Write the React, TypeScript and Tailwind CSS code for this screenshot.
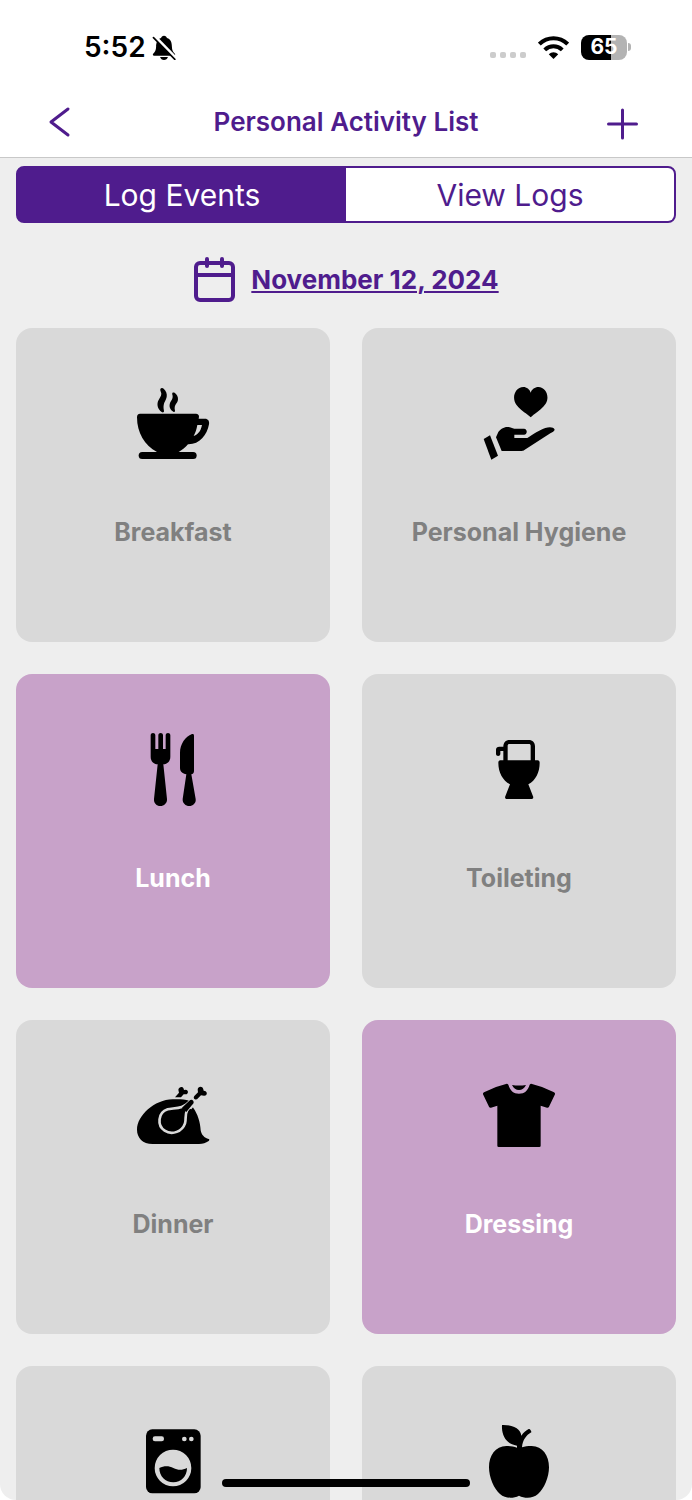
import { useState, type ReactNode } from 'react';

const CARD_BG = 'fill-[#d9d9d9]';
const CARD_LINE = 'stroke-[#d9d9d9]';

function ActivityIcon({ viewBox, children }: { viewBox: string; children: ReactNode }) {
  return (
    <svg viewBox={viewBox} className="size-[72px] overflow-visible" fill="currentColor" aria-hidden="true">
      {children}
    </svg>
  );
}

const breakfastIcon = (
  <ActivityIcon viewBox="51 54 216 216">
    <path d="M121 57C123 53 128 53 131 56C138 63 142 71 140 81C138 91 132 96 131 106C130 112 131 118 132 123C132 128 128 128 125 126C114 119 110 106 114 94C117 85 124 80 124 71C123 65 120 62 121 57Z" />
    <path d="M157 69C160 66 165 68 168 72C174 79 176 88 172 96C168 103 163 107 164 116L165 122C165 126 161 127 158 124C149 118 147 108 150 99C153 92 159 87 158 78C157 74 156 72 157 69Z" />
    <path
      fillRule="evenodd"
      d="M60 131H228C234 131 237 135 237 140L236 146H255C264 146 269 153 267 163C261 196 238 224 204 223C196 232 187 240 176 246H111C74 226 51 189 51 142C51 135 54 131 60 131ZM232 165C230 178 226 189 221 198C232 195 242 185 246 165Z"
    />
    <rect x="56" y="246" width="174" height="21" rx="10.5" />
  </ActivityIcon>
);

const hygieneIcon = (
  <ActivityIcon viewBox="54 54 216 216">
    <path d="M197 142C190 135 165 119 154 104C139 83 150 52 175 51C185 51 194 58 197 68C200 58 210 51 220 51C243 52 255 80 242 101C232 117 207 132 197 142Z" />
    <path d="M56 207L75 196L99 257L79 269Z" />
    <path d="M93 202L100 186C106 178 117 170 129 171C137 171 141 175 148 176H177C188 176 188 194 177 194H148V204H187C202 194 226 179 241 174C252 170 266 170 269 179C268 184 262 186 256 190L177 241C174 243 172 243 168 243H110Z" />
  </ActivityIcon>
);

const lunchIcon = (
  <ActivityIcon viewBox="51 57 216 216">
    <path d="M92 61C92 52 106 52 106 61V102H115V61C115 52 129 52 129 61V102H137V61C137 52 151 52 151 61V125C151 139 142 147 130 148L141 252C142 265 132 273 121 273C110 273 101 265 102 252L113 148C101 147 92 139 92 125Z" />
    <path d="M216 57C220 56 222 58 222 62V168C222 174 219 177 214 178L227 252C229 265 218 273 208 273C197 273 187 265 188 252L199 178C188 176 180 170 180 159V113C180 87 196 65 216 57Z" />
  </ActivityIcon>
);

const toiletIcon = (
  <ActivityIcon viewBox="54 57 216 216">
    <path
      fillRule="evenodd"
      d="M134 75H191C203 75 210 83 210 94V136H218C222 136 224 139 224 143C224 172 212 196 190 208L204 244C206 249 204 252 199 252H126C121 252 119 249 121 244L135 208C113 196 100 172 100 143C100 139 102 136 106 136H115V108H106V117C106 125 93 125 93 117V104C93 98 97 95 103 95H115C115 83 122 75 134 75ZM133 87C130 87 128 89 128 92V136H197V92C197 89 195 87 192 87Z"
    />
  </ActivityIcon>
);

const dinnerIcon = (
  <ActivityIcon viewBox="51 60 216 216">
    <path d="M98 252C68 252 51 233 51 209C51 167 103 119 158 118C177 117 193 118 208 122L220 144C233 162 241 187 242 211C244 224 253 234 266 237C269 238 268 241 266 243C257 249 249 252 237 252Z" />
    <path
      d="M214 120C205 129 194 138 185 141C171 146 153 145 143 148C113 158 111 197 134 212C157 227 187 214 195 190C199 178 194 165 201 152C207 142 215 135 224 126Z"
      fill="none"
      className={CARD_LINE}
      strokeWidth="8"
      strokeLinejoin="round"
    />
    <path d="M205 122L222 117L230 128L214 148L199 143Z" className={CARD_BG} />
    <path d="M208 122C213 117 221 119 221 127C221 131 218 133 216 135L199 156L186 143Z" />
    <path d="M223 108L234 97L233 89C234 78 248 78 250 88L251 92L255 93C264 97 261 108 252 107L243 106L231 118C225 120 218 115 223 108Z" />
    <path d="M165 112L177 98L175 89C177 79 189 78 191 86L192 90L197 89C206 90 206 102 197 103L191 103L183 112Z" />
  </ActivityIcon>
);

const dressingIcon = (
  <ActivityIcon viewBox="54 60 216 216">
    <path d="M123 72Q127 70 130 74C135 91 145 101 162 101C179 101 189 91 194 74Q197 70 201 72L231 81L267 97Q271 99 270 103L252 140Q250 144 246 143L227 137V257Q227 261 223 261H101Q97 261 97 257V137L78 143Q74 144 72 140L54 103Q53 99 57 97L93 81Z" />
    <path d="M141 75Q162 78 183 75C178 86 171 90 162 90C153 90 146 86 141 75Z" />
  </ActivityIcon>
);

const laundryIcon = (
  <ActivityIcon viewBox="411 198 216 216">
    <rect x="438" y="208" width="164" height="192" rx="19" />
    <rect x="458" y="229" width="34" height="15" rx="7" className={CARD_BG} />
    <circle cx="553" cy="237" r="7" className={CARD_BG} />
    <circle cx="574" cy="237" r="7" className={CARD_BG} />
    <circle cx="519" cy="324" r="55" className={CARD_BG} />
    <path d="M478 324C492 317 507 317 520 324C534 331 547 331 561 324C561 349 543 367 520 367C496 367 478 349 478 324Z" />
  </ActivityIcon>
);

const snackIcon = (
  <ActivityIcon viewBox="411 198 216 216">
    <path d="M468 195C502 194 523 206 526 227C532 218 540 212 548 207C552 205 557 214 556 217C540 226 530 240 528 262C536 259 545 258 557 258C590 259 609 286 609 322C609 352 594 387 576 402C560 416 537 416 519 407C501 416 478 416 462 402C444 387 429 352 429 322C429 286 448 259 481 258C493 258 504 260 513 263V257C483 253 466 229 468 195Z" />
  </ActivityIcon>
);

type Activity = { id: string; label?: string; icon: ReactNode; logged: boolean };

const activities: Activity[] = [
  { id: 'Breakfast', label: 'Breakfast', icon: breakfastIcon, logged: false },
  { id: 'Personal Hygiene', label: 'Personal Hygiene', icon: hygieneIcon, logged: false },
  { id: 'Lunch', label: 'Lunch', icon: lunchIcon, logged: true },
  { id: 'Toileting', label: 'Toileting', icon: toiletIcon, logged: false },
  { id: 'Dinner', label: 'Dinner', icon: dinnerIcon, logged: false },
  { id: 'Dressing', label: 'Dressing', icon: dressingIcon, logged: true },
  { id: 'Laundry', icon: laundryIcon, logged: false },
  { id: 'Snack', icon: snackIcon, logged: false },
];

function StatusBar() {
  return (
    <div className="flex h-[90px] shrink-0 items-center justify-between pt-1 pr-[61px] pl-[84px] text-black">
      <div className="flex items-center gap-1.5">
        <span className="text-[28px] leading-8 font-semibold">5:52</span>
        <svg viewBox="0 0 72 76" className="h-[25px] w-6" fill="currentColor" aria-hidden="true">
          <path d="M36 2C41 2 44 5 45 9C57 13 60 23 60 36C60 47 64 52 69 57C71 60 70 63 66 63H6C2 63 1 60 3 57C8 52 12 47 12 36C12 23 16 13 27 9C28 5 31 2 36 2Z" />
          <path d="M24 67H48C46 73 42 76 36 76C30 76 26 73 24 67Z" />
          <path d="M7 3L72 70" stroke="white" strokeWidth="9" />
          <path d="M4 8L69 74" stroke="currentColor" strokeWidth="5" strokeLinecap="round" />
        </svg>
      </div>
      <div className="flex items-center">
        <div className="mt-4 mr-3 flex gap-1">
          <span className="size-1.5 rounded-xs bg-[#cccccc]" />
          <span className="size-1.5 rounded-xs bg-[#cccccc]" />
          <span className="size-1.5 rounded-xs bg-[#cccccc]" />
          <span className="size-1.5 rounded-xs bg-[#cccccc]" />
        </div>
        <svg viewBox="0 0 92 68" className="mr-3 h-[23px] w-[31px]" fill="none" stroke="currentColor" aria-hidden="true">
          <path d="M4 24C28 1 64 1 88 24" strokeWidth="12" />
          <path d="M20 41C35 27 57 27 72 41" strokeWidth="12" />
          <path d="M32 54C40 46 52 46 60 54L46 68Z" fill="currentColor" stroke="none" />
        </svg>
        <div className="flex items-center gap-px">
          <div className="flex h-[25px] w-[46px] items-center justify-center rounded-lg bg-linear-to-r from-black from-65% to-[#b3b3b3] to-65% text-[21px] leading-6 font-bold text-white">
            65
          </div>
          <span className="h-2 w-[3px] rounded-r-full bg-[#b3b3b3]" />
        </div>
      </div>
    </div>
  );
}

export default function App() {
  const [tab, setTab] = useState<'log' | 'view'>('log');
  const tabStyle = (active: boolean) =>
    active ? 'flex-1 bg-[#4f1c8d] text-white' : 'flex-1 bg-white text-[#4f1c8d]';

  return (
    <div className="relative flex h-screen flex-col bg-white font-['Inter',sans-serif]">
      <StatusBar />
      <header className="flex h-[68px] shrink-0 items-center justify-between border-b border-[#c8c8c8] px-12 pb-1 text-[#4f1c8d]">
        <button type="button" aria-label="Back" className="flex w-10">
          <svg viewBox="0 0 24 32" className="h-8 w-6" fill="none" stroke="currentColor" strokeWidth="3" strokeLinecap="round" strokeLinejoin="round" aria-hidden="true">
            <path d="M20 3L3 16L20 29" />
          </svg>
        </button>
        <h1 className="text-[26px] leading-8 font-semibold">Personal Activity List</h1>
        <button type="button" aria-label="Add activity" className="flex w-10 pt-1">
          <svg viewBox="0 0 36 32" className="h-8 w-9" fill="none" stroke="currentColor" strokeWidth="3" strokeLinecap="round" aria-hidden="true">
            <path d="M4.5 16H32.5M18.5 2V30" />
          </svg>
        </button>
      </header>

      <main className="min-h-0 flex-1 overflow-y-auto rounded-b-2xl bg-[#eeeeee] px-4 pt-2 pb-16 [scrollbar-width:none]">
        <div className="flex h-[57px] overflow-hidden rounded-lg border-2 border-[#4f1c8d] bg-[#4f1c8d] text-[30px] leading-9">
          <button type="button" aria-pressed={tab === 'log'} onClick={() => setTab('log')} className={tabStyle(tab === 'log')}>
            Log Events
          </button>
          <button type="button" aria-pressed={tab === 'view'} onClick={() => setTab('view')} className={tabStyle(tab === 'view')}>
            View Logs
          </button>
        </div>

        <div className="flex h-[105px] items-center justify-center pt-2">
          <button type="button" className="flex items-center gap-4 text-[#4f1c8d]">
            <svg viewBox="0 0 42 46" className="h-[46px] w-[42px]" fill="none" stroke="currentColor" strokeWidth="4" strokeLinecap="round" aria-hidden="true">
              <rect x="3" y="6" width="37" height="37" rx="4" />
              <path d="M3 18H40M14 2V9M29 2V9" />
            </svg>
            <span className="text-[26px] leading-8 font-bold underline decoration-2 underline-offset-2">November 12, 2024</span>
          </button>
        </div>

        <div className="grid grid-cols-2 gap-8">
          {activities.map(({ id, label, icon, logged }) => (
            <button
              key={id}
              type="button"
              aria-label={id}
              aria-pressed={logged}
              className={
                logged
                  ? 'flex aspect-square flex-col items-center gap-14 rounded-2xl bg-[#c8a2c9] pt-[60px] text-white'
                  : 'flex aspect-square flex-col items-center gap-14 rounded-2xl bg-[#d9d9d9] pt-[60px] text-[#808080]'
              }
            >
              <span className="text-black">{icon}</span>
              {label && <span className="text-[25px] leading-8 font-bold">{label}</span>}
            </button>
          ))}
        </div>
      </main>

      <div className="absolute bottom-[13px] left-1/2 h-2 w-[248px] -translate-x-1/2 rounded-full bg-black" />
    </div>
  );
}
